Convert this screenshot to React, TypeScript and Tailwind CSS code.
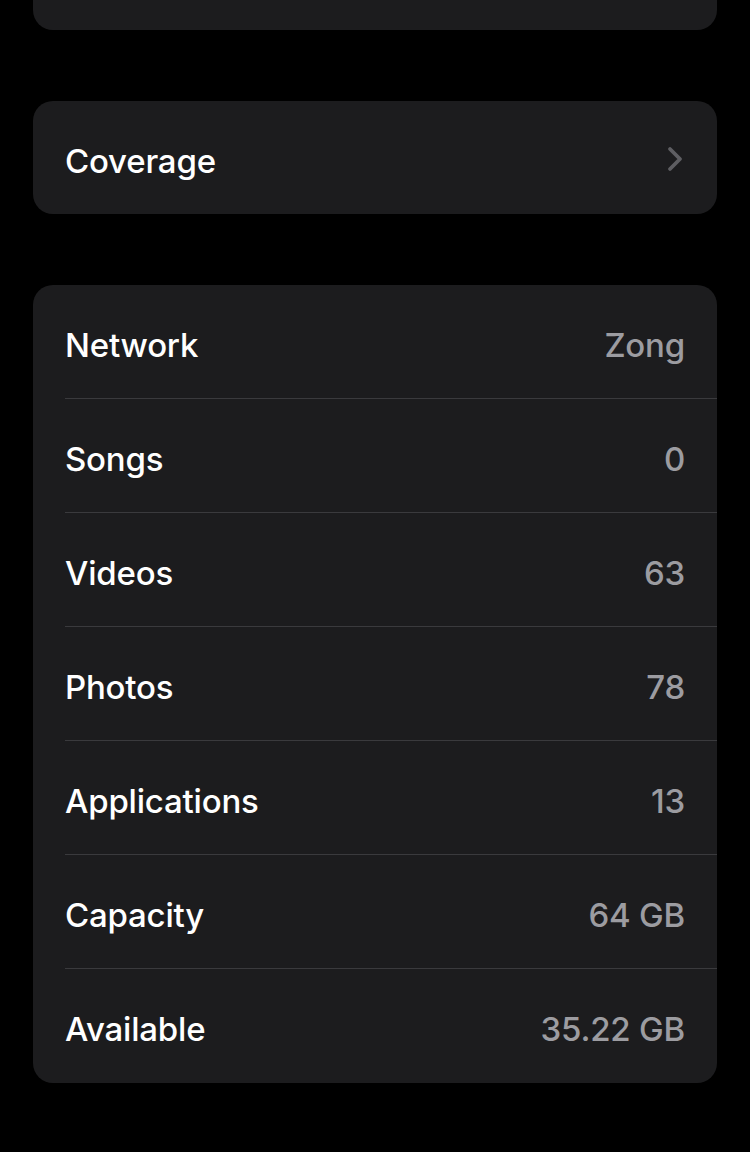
const rows = [
  { label: "Network", value: "Zong" },
  { label: "Songs", value: "0" },
  { label: "Videos", value: "63" },
  { label: "Photos", value: "78" },
  { label: "Applications", value: "13" },
  { label: "Capacity", value: "64 GB" },
  { label: "Available", value: "35.22 GB" },
];

export default function App() {
  return (
    <div className="min-h-[1152px] bg-black font-['Inter','Liberation_Sans',sans-serif] text-white antialiased">
      <div className="px-[33px]">
        <div className="h-[30px] rounded-b-[20px] bg-[#1c1c1e]" />

        <div className="mt-[71px] flex h-[113px] items-center justify-between rounded-[20px] bg-[#1c1c1e] pl-8 pr-[32px] pt-2">
          <span className="text-[33px] font-medium tracking-[-0.2px]">Coverage</span>
          <svg width="20" height="28" viewBox="0 0 20 28" fill="none" className="-mt-[6px]">
            <path
              d="M5 4l10 10L5 24"
              stroke="#5e5e62"
              strokeWidth="3.8"
              strokeLinecap="round"
              strokeLinejoin="round"
            />
          </svg>
        </div>

        <div className="mt-[71px] overflow-hidden rounded-[20px] bg-[#1c1c1e] pl-8">
          {rows.map((row, i) => (
            <div
              key={row.label}
              className={
                i < rows.length - 1
                  ? "flex h-[114px] items-center justify-between border-b border-[#3a3a3d] pr-8 pt-2"
                  : "flex h-[114px] items-center justify-between pr-8 pt-2"
              }
            >
              <span className="text-[33px] font-medium tracking-[-0.2px]">{row.label}</span>
              <span className="text-[33px] font-medium tracking-[-0.2px] text-[#9c9ca1]">
                {row.value}
              </span>
            </div>
          ))}
        </div>
      </div>
    </div>
  );
}
